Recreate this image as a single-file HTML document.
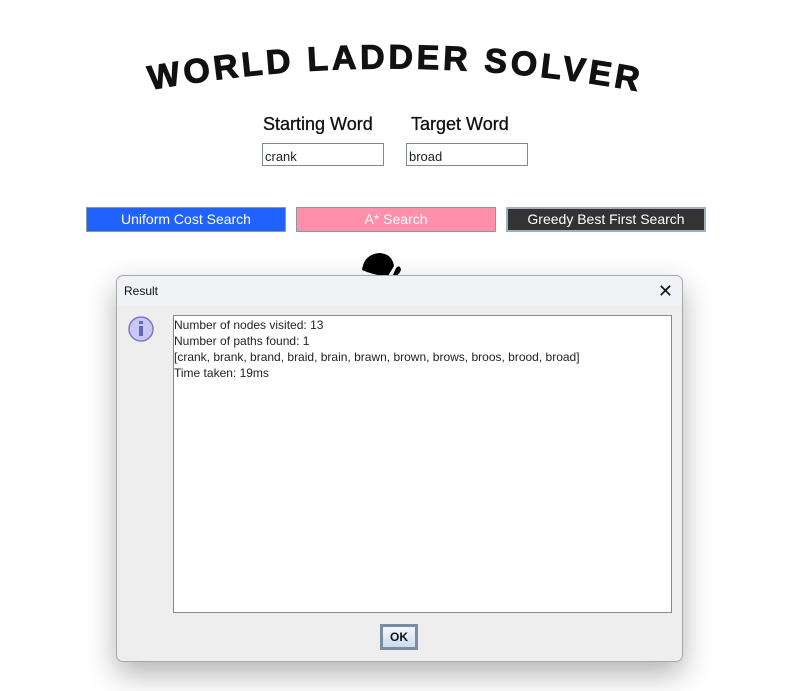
<!DOCTYPE html>
<html><head><style>
body{margin:0;width:795px;height:691px;background:#fff;position:relative;overflow:hidden;font-family:"Liberation Sans",sans-serif}
.lbl{position:absolute;top:114px;font-size:18px;color:#111;-webkit-text-stroke:0.3px #111}
.inp{position:absolute;top:143px;width:122px;height:23px;border:1px solid #7a8a99;box-sizing:border-box;font-size:13px;padding:6px 0 0 2px;line-height:14px;color:#222}
.btn{position:absolute;top:207px;height:25px;box-sizing:border-box;border:1px solid #8899aa;color:#fff;font-size:14px;text-align:center;line-height:23px}
.dlg{position:absolute;left:116px;top:275px;width:567px;height:387px;background:#eeeeee;border:1px solid #a8a8a8;border-radius:7px;box-sizing:border-box;box-shadow:0 12px 30px rgba(0,0,0,.3);overflow:hidden}
.tb{height:30px;background:#f0f2f5;font-size:12px;line-height:30px;padding-left:7px;color:#111;position:relative}
.ta{position:absolute;left:56px;top:39px;width:499px;height:298px;background:#fff;border:1px solid #7a8a99;box-sizing:border-box;font-size:12px;line-height:16px;padding:1px 0 0 0;color:#222}
.ok{position:absolute;left:263px;top:348px;width:38px;height:26px;box-sizing:border-box;border:3px solid #7b8ea0;background:linear-gradient(#f2f7fc,#c9dcee);font-size:12px;font-weight:bold;text-align:center;line-height:20px;color:#111}
</style></head><body>
<svg width="795" height="120" style="position:absolute;left:0;top:0">
<defs><path id="arc" d="M150,90 Q395,46 642,92"/></defs>
<text font-family="Liberation Sans,sans-serif" font-weight="bold" font-size="34" fill="#111" stroke="#111" stroke-width="1"><textPath href="#arc" textLength="490" lengthAdjust="spacing">WORLD LADDER SOLVER</textPath></text>
</svg>
<div class="lbl" style="left:263px">Starting Word</div>
<div class="lbl" style="left:411px">Target Word</div>
<div class="inp" style="left:262px">crank</div>
<div class="inp" style="left:406px">broad</div>
<div class="btn" style="left:86px;width:200px;background:#1f62ff">Uniform Cost Search</div>
<div class="btn" style="left:296px;width:200px;background:#ff8fab">A* Search</div>
<div class="btn" style="left:506px;width:200px;background:#333;border:2px solid #9fb0c2;line-height:21px">Greedy Best First Search</div>
<svg width="50" height="30" style="position:absolute;left:358px;top:250px">
<path d="M4,20 Q6,4 22,3 Q34,4 36,16 L30,26 Q18,26 4,20 Z" fill="#000"/>
<path d="M38,18 Q42,14 43,20 Q41,26 34,27 Z" fill="#000"/>
</svg>
<div class="dlg">
<div class="tb">Result<span style="position:absolute;right:9px;top:0;font-size:18px;font-weight:300">✕</span></div>
<svg width="30" height="30" style="position:absolute;left:10px;top:39px">
<circle cx="14" cy="14" r="12" fill="#c9c8f5" stroke="#7a79c7" stroke-width="1.5"/>
<rect x="12" y="11" width="4" height="10" fill="#6665b7"/><rect x="12" y="6" width="4" height="3" fill="#6665b7"/>
</svg>
<div class="ta">Number of nodes visited: 13<br>Number of paths found: 1<br>[crank, brank, brand, braid, brain, brawn, brown, brows, broos, brood, broad]<br>Time taken: 19ms</div>
<div class="ok">OK</div>
</div>
</body></html>
